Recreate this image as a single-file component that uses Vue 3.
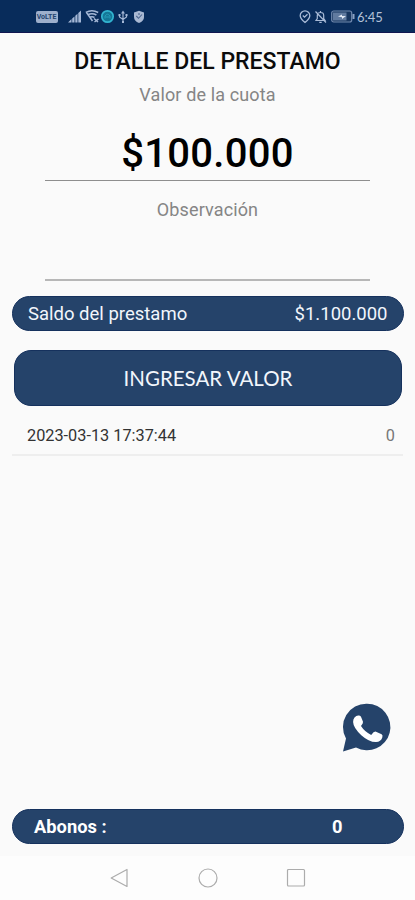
<script setup>
const loan = {
  fee: '$100.000',
  balance: '$1.100.000',
  payments: [{ date: '2023-03-13 17:37:44', value: 0 }],
  total: 0,
}
</script>

<template>
  <div class="screen">
    <header class="status">
      <div class="status-group">
        <span class="volte">VoLTE</span>
        <svg class="signal" width="14" height="13" viewBox="0 0 14 13">
          <path d="M0 12.5 3.5 9v3.5zM4.2 8.5l2.3-2v6H4.2zM7.3 5.8l2.2-2v8.7H7.3zM10.3 3 13 0.5v12h-2.7z" fill="#a5b8d6" />
        </svg>
        <svg class="wifi" width="15" height="13" viewBox="0 0 15 13" fill="none" stroke="#a5b8d6" stroke-width="1.5">
          <path d="M.8 2.5q6-3.5 12.4 0M2.6 5q4.400-2.700 8.800 0M4.500 7.500q2.500-1.500 5 0M1.500 2.500l6 8.500M9 8.500l4 3.500M9.500 12l4-3" />
        </svg>
        <svg class="ring" width="15" height="15" viewBox="0 0 15 15">
          <circle cx="7.5" cy="7.500" r="5.700" fill="#147797" stroke="#32b4d0" stroke-width="1.700" />
          <path d="M5 9.500V7q2.500-3.500 5 0v2.500M5.500 8h4" fill="none" stroke="#249bb8" />
        </svg>
        <svg class="usb" width="10" height="14" viewBox="0 0 10 14" fill="none" stroke="#a5b8d6" stroke-width="1.200">
          <path d="M5 2v10M1.500 5v2L5 9.500 8.500 7V5" />
          <path d="M3 3.500 5 .5l2 3zM.5 4h2v2h-2zM7.500 4h2v2h-2zM4 11h2v2H4z" fill="#a5b8d6" stroke="none" />
        </svg>
        <svg class="shield" width="12" height="14" viewBox="0 0 12 14">
          <path d="M6 .8 11 2.500v4.500q0 4-5 6-5-2-5-6V2.500z" fill="#a9b9d3" />
          <path d="m3.300 6 2.200 2.300L9 4.500M6 3v2" fill="none" stroke="#4c668f" stroke-width="1.100" />
        </svg>
      </div>
      <div class="status-group">
        <svg width="12" height="14" viewBox="0 0 12 14" fill="none" stroke="#a9bbd7" stroke-width="1.300">
          <path d="M6 12.500Q1.200 8.500 1.200 5.700a4.800 4.800 0 0 1 9.600 0Q10.800 8.500 6 12.500z" />
          <path d="m3.800 5.500 1.700 1.700 3-3" />
        </svg>
        <svg class="bell" width="13" height="14" viewBox="0 0 13 14" fill="none" stroke="#a9bbd7" stroke-width="1.200">
          <path d="M2 10.500h9L9.700 8.500V5.500Q9.700 2.500 6.500 2.500T3.300 5.500v3zM6.500 1v1.500M5.300 12.300h2.400M1.500 1.500l10.500 11" />
        </svg>
        <svg class="battery" width="24" height="13" viewBox="0 0 24 13">
          <rect x=".7" y="1" width="20" height="11" rx="2" fill="#17365f" stroke="#7189ae" stroke-width="1.200" />
          <rect x="2" y="2.500" width="13.500" height="8" fill="#617b9f" />
          <path d="m7 6.500 4-2v1.500h4l-4 3V7.200z" fill="#e2eaf5" />
          <path d="M22.500 4v5" stroke="#8ca2c4" stroke-width="2" />
        </svg>
        <span class="time">6:45</span>
      </div>
    </header>

    <main class="content">
      <h1 class="title"><span>DETALLE DEL PRESTAMO</span></h1>
      <p class="label fee-label">Valor de la cuota</p>
      <div class="field amount">{{ loan.fee }}</div>
      <p class="label note-label">Observación</p>
      <div class="field note"></div>
      <section class="pill balance">
        <span class="balance-name">Saldo del prestamo</span>
        <span class="balance-value">{{ loan.balance }}</span>
      </section>
      <button class="enter">INGRESAR VALOR</button>
      <div v-for="payment in loan.payments" :key="payment.date" class="payment">
        <span class="date">{{ payment.date }}</span>
        <span class="value">{{ payment.value }}</span>
      </div>
      <div class="chat">
        <svg width="50" height="50" viewBox="0 0 50 50">
          <path d="M26 1.700A23.300 23.300 0 1 1 15 45.500L2 49.500 5 36.500A23.300 23.300 0 0 1 26 1.700z" fill="#25436a" />
          <path d="M13.500 15.500q2-2.500 4.600-2 1.600.3 2.100 1.700l1.800 4.600q.4 1.500-2 4.300 3.800 6 10.200 8.800 3-3.900 4.800-3.200l5.600 2.500q1.500.8.700 3.200-1.500 4.300-6.200 4.600-7 .2-14.800-6.800-8-7.500-8.200-13.200 0-2.800 1.400-4.500z" fill="#fff" />
        </svg>
      </div>
      <section class="pill total">
        <span class="total-name">Abonos :</span>
        <span class="total-value">{{ loan.total }}</span>
      </section>
    </main>

    <nav class="nav">
      <svg width="20" height="22" viewBox="0 0 20 22"><path d="M17 2.500v17L1.200 11z" /></svg>
      <svg width="20" height="22" viewBox="0 0 20 22"><circle cx="10" cy="11" r="9" /></svg>
      <svg width="20" height="22" viewBox="0 0 20 22"><rect x="1.500" y="2.500" width="17" height="16.500" rx="1" /></svg>
    </nav>
  </div>
</template>

<style>
body { background: #fafafa; }
</style>

<style scoped>
.screen {
  box-sizing: border-box;
  width: 415px;
  height: 900px;
  display: flex;
  flex-direction: column;
  overflow: hidden;
  background: #fafafa;
  font-family: Roboto, "Liberation Sans", sans-serif;
}
svg { display: block; flex: none; overflow: visible; }
span { white-space: nowrap; }
.status {
  box-sizing: border-box;
  height: 33px;
  flex: none;
  display: flex;
  justify-content: space-between;
  padding: 1px 34px 0 35.500px;
  background: #082c5b;
  border-bottom: 1px solid #101650;
}
.status-group { display: flex; align-items: center; }
.volte {
  box-sizing: border-box;
  width: 22px;
  height: 12px;
  border-radius: 2px;
  background: #9dafcb;
  color: #23446f;
  font-size: 7px;
  font-weight: 700;
  line-height: 12px;
  text-align: center;
}
.signal { margin-left: 10px; }
.wifi { margin-left: 3px; }
.ring { margin-left: 0; }
.usb { margin-left: 3.500px; }
.shield { margin-left: 5px; }
.bell { margin-left: 2.500px; }
.battery { margin-left: 4.500px; }
.time {
  width: 24px;
  margin-left: 2px;
  color: #b3c1d8;
  font-family: Lato, sans-serif;
  font-size: 13px;
  line-height: 16px;
}
.content { flex: 1; display: flex; flex-direction: column; padding: 0 12px; }
.title {
  margin: 15px 0 0;
  height: 27px;
  text-align: center;
  color: #0b0b0b;
  font-size: 23px;
  font-weight: 500;
  line-height: 28px;
}
.label {
  margin: 0;
  text-align: center;
  color: #858585;
  font-size: 18px;
  font-weight: 400;
  line-height: 24px;
  letter-spacing: .13px;
}
.fee-label { margin-top: 8px; }
.field { box-sizing: border-box; margin: 0 33px; border-bottom: 1px solid #8e8e8e; }
.amount {
  height: 74px;
  padding-top: 23px;
  text-align: center;
  color: #000;
  font-size: 40px;
  font-weight: 500;
  line-height: 48px;
  letter-spacing: .3px;
}
.note-label { margin-top: 17px; }
.note { height: 59px; border-bottom: 2px solid #b7b7b7; }
.pill {
  box-sizing: border-box;
  width: 391.500px;
  height: 35px;
  flex: none;
  display: flex;
  align-items: center;
  justify-content: space-between;
  border: 1px solid #15315d;
  border-radius: 18px;
  background: #25436a;
  color: #f2f6fc;
  font-size: 18.500px;
}
.balance { margin-top: 15px; padding: 0 15px; }
.enter {
  width: 388px;
  height: 56px;
  flex: none;
  margin: 19px 0 0 2px;
  padding: 0;
  border: 1px solid #15315d;
  border-radius: 17px;
  background: #25436a;
  color: #f2f6fc;
  font-family: Lato, sans-serif;
  font-size: 20.500px;
  line-height: 54px;
}
.payment {
  box-sizing: border-box;
  height: 50px;
  flex: none;
  display: flex;
  align-items: center;
  justify-content: space-between;
  padding: 11px 8px 0 15px;
  border-bottom: 2px solid #eee;
  color: #333;
  font-size: 16.300px;
}
.value { color: #777; }
.chat { display: flex; justify-content: flex-end; margin: auto 12.500px 0 0; }
.total { margin-top: 57px; margin-bottom: 12px; padding: 0 60px 0 21px; font-size: 18.300px; font-weight: 700; color: #fff; }
.nav {
  height: 44px;
  flex: none;
  display: flex;
  justify-content: center;
  align-items: center;
  gap: 68px;
  background: #fdfdfd;
}
.nav svg { fill: none; stroke: #acacac; stroke-width: 1.200; stroke-linejoin: round; }
</style>
